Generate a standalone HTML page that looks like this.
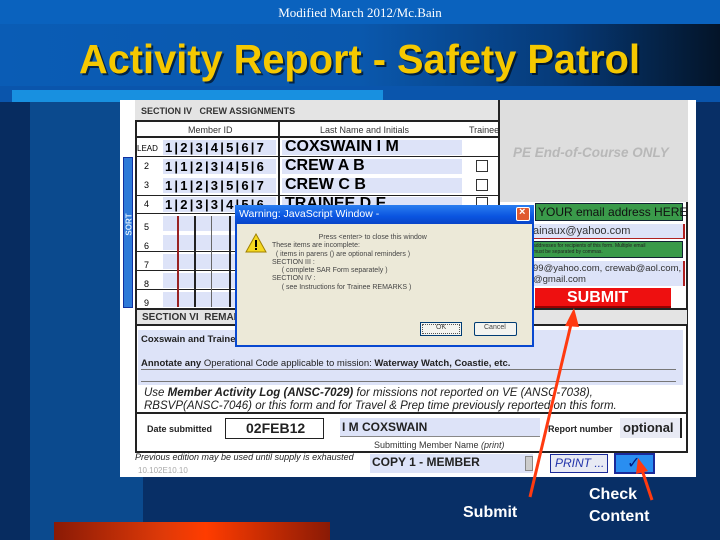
<!DOCTYPE html>
<html><head><meta charset="utf-8"><style>
*{margin:0;padding:0;box-sizing:border-box}
body{width:720px;height:540px;overflow:hidden;position:relative;background:#082f66;font-family:"Liberation Sans",Arial,sans-serif}
.a{position:absolute}
.t{position:absolute;white-space:nowrap}
</style></head><body>
<div class="a" style="left:0;top:0;width:720px;height:24px;background:#0a62be"></div>
<div class="a" style="left:0;top:24px;width:720px;height:62px;background:linear-gradient(90deg,#0a5cb5 0%,#0a58ad 50%,#063a78 78%,#041428 100%)"></div>
<div class="a" style="left:0;top:86px;width:720px;height:16px;background:#0a55ac"></div>
<div class="a" style="left:12px;top:90px;width:371px;height:12px;background:#1890e0"></div>
<div class="a" style="left:0;top:102px;width:30px;height:438px;background:#072c60"></div>
<div class="a" style="left:30px;top:102px;width:113px;height:438px;background:#0b4a8e"></div>
<div class="a" style="left:54px;top:522px;width:276px;height:18px;background:linear-gradient(90deg,#8a1a05,#e03a08 40%,#ff3c00 55%,#8a1a05)"></div>
<div class="t" style="left:0;width:720px;top:5px;text-align:center;color:#fff;font:13px 'Liberation Serif',serif">Modified March 2012/Mc.Bain</div>
<svg class="a" style="left:0;top:0" width="720" height="100"><text x="79" y="73" textLength="561" lengthAdjust="spacingAndGlyphs" font-family="Liberation Sans" font-weight="bold" font-size="41" fill="#000" opacity=".6" transform="translate(2,2)">Activity Report - Safety Patrol</text><text x="79" y="73" textLength="561" lengthAdjust="spacingAndGlyphs" font-family="Liberation Sans" font-weight="bold" font-size="41" fill="#f5c800">Activity Report - Safety Patrol</text></svg>

<div class="a" style="left:120px;top:100px;width:576px;height:377px;background:#fff"></div>
<div class="a" style="left:123px;top:157px;width:10px;height:151px;background:#2e7ad8;border:1px solid #1030a0"></div>
<div class="t" style="left:118px;top:220px;color:#ddeeff;font-size:8px;font-weight:bold;transform:rotate(-90deg)">SORT</div>
<div class="a" style="left:135px;top:100px;width:553px;height:353px;border:2px solid #222;border-top:none"></div>
<div class="a" style="left:135px;top:100px;width:365px;height:22px;background:#e4e4e4;border-right:2px solid #222;border-bottom:2px solid #222"></div>
<div class="t" style="left:141px;top:106px;font-size:9px;font-weight:bold;color:#333">SECTION IV &nbsp; CREW ASSIGNMENTS</div>
<div class="a" style="left:500px;top:100px;width:188px;height:102px;background:#dedede"></div>
<div class="t" style="left:513px;top:145px;font-size:13.5px;font-weight:bold;font-style:italic;color:#b8b8b8">PE End-of-Course ONLY</div>
<div class="t" style="left:188px;top:125px;font-size:9px;color:#333">Member ID</div>
<div class="t" style="left:320px;top:125px;font-size:9px;color:#333">Last Name and Initials</div>
<div class="t" style="left:469px;top:125px;font-size:9px;color:#333">Trainee</div>
<div class="a" style="left:278px;top:122px;width:2px;height:188px;background:#222"></div>
<div class="a" style="left:135px;top:136px;width:365px;height:2px;background:#222"></div>
<div class="a" style="left:498px;top:122px;width:2px;height:188px;background:#222"></div>
<div class="a" style="left:163px;top:140px;width:113px;height:15px;background:#dde3f8"></div>
<div class="a" style="left:282px;top:140px;width:180px;height:15px;background:#dde3f8"></div>
<div class="t" style="left:137px;top:144px;font-size:8px">LEAD</div>
<div class="t" style="left:165px;top:140px;font-size:13px;font-weight:bold;letter-spacing:2.2px">1|2|3|4|5|6|7</div>
<div class="t" style="left:285px;top:138px;font-size:16px;font-weight:bold">COXSWAIN I M</div>
<div class="a" style="left:135px;top:156px;width:365px;height:1px;background:#222"></div>
<div class="a" style="left:163px;top:159px;width:113px;height:15px;background:#dde3f8"></div>
<div class="a" style="left:282px;top:159px;width:180px;height:15px;background:#dde3f8"></div>
<div class="t" style="left:144px;top:161px;font-size:9px">2</div>
<div class="t" style="left:165px;top:159px;font-size:13px;font-weight:bold;letter-spacing:2.2px">1|1|2|3|4|5|6</div>
<div class="t" style="left:285px;top:157px;font-size:16px;font-weight:bold">CREW A B</div>
<div class="a" style="left:476px;top:160px;width:12px;height:12px;border:1px solid #333"></div>
<div class="a" style="left:163px;top:178px;width:113px;height:15px;background:#dde3f8"></div>
<div class="a" style="left:282px;top:178px;width:180px;height:15px;background:#dde3f8"></div>
<div class="t" style="left:144px;top:180px;font-size:9px">3</div>
<div class="t" style="left:165px;top:178px;font-size:13px;font-weight:bold;letter-spacing:2.2px">1|1|2|3|5|6|7</div>
<div class="t" style="left:285px;top:176px;font-size:16px;font-weight:bold">CREW C B</div>
<div class="a" style="left:476px;top:179px;width:12px;height:12px;border:1px solid #333"></div>
<div class="a" style="left:135px;top:195px;width:365px;height:1px;background:#222"></div>
<div class="a" style="left:163px;top:197px;width:113px;height:15px;background:#dde3f8"></div>
<div class="a" style="left:282px;top:197px;width:180px;height:8px;background:#dde3f8"></div>
<div class="t" style="left:144px;top:199px;font-size:9px">4</div>
<div class="t" style="left:165px;top:197px;font-size:13px;font-weight:bold;letter-spacing:2.2px">1|2|3|3|4|5|6</div>
<div class="t" style="left:285px;top:195px;font-size:16px;font-weight:bold">TRAINEE D E</div>
<div class="a" style="left:476px;top:197px;width:12px;height:10px;border:1px solid #333;border-bottom:none"></div>
<div class="a" style="left:135px;top:213px;width:365px;height:1px;background:#222"></div>
<div class="a" style="left:163px;top:216px;width:113px;height:15px;background:#dde3f8"></div>
<div class="a" style="left:163px;top:235px;width:113px;height:15px;background:#dde3f8"></div>
<div class="a" style="left:163px;top:254px;width:113px;height:15px;background:#dde3f8"></div>
<div class="a" style="left:163px;top:273px;width:113px;height:15px;background:#dde3f8"></div>
<div class="a" style="left:163px;top:292px;width:113px;height:15px;background:#dde3f8"></div>
<div class="t" style="left:144px;top:218px;font-size:9px;line-height:19px">5<br>6<br>7<br>8<br>9</div>
<div class="a" style="left:135px;top:251px;width:365px;height:1px;background:#222"></div>
<div class="a" style="left:135px;top:270px;width:365px;height:1px;background:#222"></div>
<div class="a" style="left:135px;top:289px;width:365px;height:1px;background:#222"></div>
<div class="a" style="left:135px;top:308px;width:553px;height:2px;background:#222"></div>
<div class="a" style="left:177px;top:216px;width:2px;height:91px;background:#922"></div>
<div class="a" style="left:194px;top:216px;width:2px;height:91px;background:#222"></div>
<div class="a" style="left:211px;top:216px;width:1px;height:91px;background:#666"></div>
<div class="a" style="left:229px;top:216px;width:2px;height:91px;background:#222"></div>
<div class="a" style="left:535px;top:203px;width:148px;height:18px;background:#3a9a4a;border:1.5px solid #123"></div>
<div class="t" style="left:538px;top:205px;font-size:12px;color:#111">YOUR email address HERE</div>
<div class="a" style="left:530px;top:224px;width:155px;height:15px;background:#dde3f8;border-right:2px solid #b02020;border-bottom:1px solid #b02020"></div>
<div class="t" style="left:533px;top:225px;font-size:11px;color:#333">ainaux@yahoo.com</div>
<div class="a" style="left:530px;top:241px;width:153px;height:17px;background:#3a9a4a;border:1.5px solid #123"></div>
<div class="t" style="left:533px;top:243px;font-size:5px;color:#222;line-height:6px">addresses for recipients of this form. Multiple email<br>must be separated by commas.</div>
<div class="a" style="left:530px;top:261px;width:155px;height:25px;background:#dde3f8;border-right:2px solid #b02020"></div>
<div class="t" style="left:533px;top:263px;font-size:9.5px;color:#333;line-height:11px">99@yahoo.com, crewab@aol.com,<br>@gmail.com</div>
<div class="a" style="left:535px;top:288px;width:136px;height:20px;background:#ee1010;border-bottom:2px solid #900"></div>
<div class="t" style="left:567px;top:289px;font-size:16px;font-weight:bold;color:#fff">SUBMIT</div>
<div class="a" style="left:137px;top:310px;width:550px;height:16px;background:#e4e4e4;border-bottom:2px solid #222"></div>
<div class="t" style="left:142px;top:312px;font-size:10px;font-weight:bold;color:#333">SECTION VI &nbsp;REMARKS</div>
<div class="a" style="left:138px;top:330px;width:545px;height:55px;background:#dde3f8"></div>
<div class="t" style="left:141px;top:334px;font-size:9.5px;color:#222"><b>Coxswain and Trainee</b></div>
<div class="t" style="left:141px;top:358px;font-size:9.5px;color:#222"><b>Annotate any</b> Operational Code applicable to mission: <b>Waterway Watch, Coastie, etc.</b></div>
<div class="a" style="left:141px;top:369px;width:535px;height:1px;background:#777"></div>
<div class="a" style="left:141px;top:381px;width:535px;height:1px;background:#777"></div>
<div class="t" style="left:144px;top:387px;font-size:11.5px;font-style:italic;color:#222;line-height:13px">Use <b>Member Activity Log (ANSC-7029)</b> for missions not reported on VE (ANSC-7038),<br>RBSVP(ANSC-7046) or this form and for Travel &amp; Prep time previously reported on this form.</div>
<div class="a" style="left:135px;top:412px;width:553px;height:2px;background:#222"></div>
<div class="t" style="left:147px;top:424px;font-size:9px;font-weight:bold;color:#222">Date submitted</div>
<div class="a" style="left:225px;top:418px;width:99px;height:21px;border:1.5px solid #222"></div>
<div class="t" style="left:246px;top:420px;font-size:14px;font-weight:bold;color:#222">02FEB12</div>
<div class="a" style="left:340px;top:418px;width:200px;height:19px;background:#dde3f8;border-bottom:1px solid #888"></div>
<div class="t" style="left:342px;top:420px;font-size:12px;font-weight:bold;color:#222">I M COXSWAIN</div>
<div class="t" style="left:548px;top:424px;font-size:9px;font-weight:bold;color:#222">Report number</div>
<div class="a" style="left:620px;top:418px;width:62px;height:20px;background:#e8eaf4;border-right:2px solid #222"></div>
<div class="t" style="left:623px;top:420px;font-size:13px;font-weight:bold;color:#222">optional</div>
<div class="t" style="left:374px;top:440px;font-size:9px;color:#333">Submitting Member Name <i>(print)</i></div>
<div class="t" style="left:135px;top:452px;font-size:9px;font-style:italic;color:#222">Previous edition may be used until supply is exhausted</div>
<div class="t" style="left:138px;top:466px;font-size:8px;color:#aaa">10.102E10.10</div>
<div class="a" style="left:370px;top:454px;width:163px;height:19px;background:#dde3f8"></div>
<div class="t" style="left:372px;top:455px;font-size:12px;font-weight:bold;color:#222">COPY 1 - MEMBER</div>
<div class="a" style="left:525px;top:456px;width:8px;height:15px;background:#ccc;border:1px solid #888"></div>
<div class="a" style="left:550px;top:454px;width:58px;height:19px;background:#e8eaf4;border:1.5px solid #1a2a9a"></div>
<div class="t" style="left:555px;top:456px;font-size:12px;font-style:italic;color:#2233aa">PRINT ...</div>
<div class="a" style="left:614px;top:453px;width:41px;height:21px;background:#2a8ef0;border:2px solid #1a2a9a"></div>
<div class="t" style="left:627px;top:453px;font-size:16px;color:#001a80">✓</div>
<div class="a" style="left:235px;top:205px;width:299px;height:142px;background:#ece9d8;border:2px solid #0848d0"></div>
<div class="a" style="left:235px;top:205px;width:299px;height:19px;background:linear-gradient(#2a7ef0,#0a54e0 60%,#0844c8)"></div>
<div class="t" style="left:239px;top:208px;font-size:10.5px;color:#fff">Warning: JavaScript Window -</div>
<div class="a" style="left:516px;top:207px;width:14px;height:14px;background:#e05a30;border:1px solid #fff;border-radius:2px"></div>
<div class="t" style="left:519px;top:206px;font-size:11px;font-weight:bold;color:#fff">×</div>
<svg class="a" style="left:245px;top:233px" width="22" height="20"><path d="M11 1L21 19H1Z" fill="#f5d820" stroke="#a08000"/><rect x="10" y="7" width="2" height="7" fill="#000"/><rect x="10" y="15" width="2" height="2" fill="#000"/></svg>
<div class="t" style="left:272px;top:234px;font-size:7px;color:#444;line-height:8.3px">&nbsp;&nbsp;&nbsp;&nbsp;&nbsp;&nbsp;&nbsp;&nbsp;&nbsp;&nbsp;&nbsp;&nbsp;&nbsp;&nbsp;&nbsp;&nbsp;&nbsp;&nbsp;&nbsp;&nbsp;&nbsp;&nbsp;&nbsp;&nbsp;Press &lt;enter&gt; to close this window<br>These items are incomplete:<br>&nbsp;&nbsp;( items in parens () are optional reminders )<br>SECTION III :<br>&nbsp;&nbsp;&nbsp;&nbsp;&nbsp;( complete SAR Form separately )<br>SECTION IV :<br>&nbsp;&nbsp;&nbsp;&nbsp;&nbsp;( see Instructions for Trainee REMARKS )</div>
<div class="a" style="left:420px;top:322px;width:42px;height:14px;background:#f4f4f0;border:1px solid #003c74;outline:1px dotted #555;outline-offset:-3px"></div>
<div class="t" style="left:436px;top:324px;font-size:7px;color:#444">OK</div>
<div class="a" style="left:474px;top:322px;width:43px;height:14px;background:#f4f4f0;border:1px solid #003c74;border-radius:2px"></div>
<div class="t" style="left:484px;top:324px;font-size:7px;color:#444">Cancel</div>
<svg class="a" style="left:0;top:0" width="720" height="540"><line x1="530" y1="497" x2="572" y2="320" stroke="#ff3a10" stroke-width="3"/><path d="M574 308L565 326L579 327Z" fill="#ff3a10"/><line x1="652" y1="500" x2="642" y2="470" stroke="#ff3a10" stroke-width="3"/><path d="M638 458L636 474L648 471Z" fill="#ff3a10"/></svg>
<div class="t" style="left:463px;top:504px;font-size:16px;font-weight:bold;color:#fff">Submit</div>
<div class="t" style="left:589px;top:484px;font-size:16px;font-weight:bold;color:#fff;line-height:22px">Check<br>Content</div>
</body></html>
